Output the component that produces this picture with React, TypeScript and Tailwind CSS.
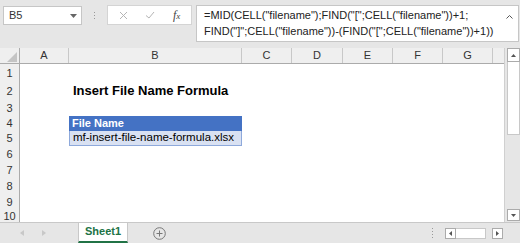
import React from 'react';

const COLS = [
  { key: 'A', w: 'w-[49px]' },
  { key: 'B', w: 'w-[173px]' },
  { key: 'C', w: 'w-[50px]' },
  { key: 'D', w: 'w-[51px]' },
  { key: 'E', w: 'w-[50px]' },
  { key: 'F', w: 'w-[50px]' },
  { key: 'G', w: 'w-[50px]' },
  { key: '', w: 'w-[11px]' },
];

const ROWS = [
  { n: 1, h: 'h-[18px]' },
  { n: 2, h: 'h-[18px]' },
  { n: 3, h: 'h-[16px]' },
  { n: 4, h: 'h-[15px]' },
  { n: 5, h: 'h-[15px]' },
  { n: 6, h: 'h-[16px]' },
  { n: 7, h: 'h-[16px]' },
  { n: 8, h: 'h-[16px]' },
  { n: 9, h: 'h-[16px]' },
  { n: 10, h: 'h-[12px]' },
];

const CellB: React.FC<{ row: number }> = ({ row }) => {
  if (row === 2) {
    return (
      <div className="w-[173px] h-full flex items-center pl-[4px] text-[13px] font-bold text-black">
        Insert File Name Formula
      </div>
    );
  }
  if (row === 4) {
    return (
      <div className="w-[173px] h-full flex items-center pl-[3px] bg-[#4472c4] text-[11px] font-bold text-white">
        File Name
      </div>
    );
  }
  if (row === 5) {
    return (
      <div className="w-[173px] h-full flex items-center pl-[3px] bg-[#d9e1f2] border-x border-b border-[#8ea9db] text-[11.5px] text-black">
        mf-insert-file-name-formula.xlsx
      </div>
    );
  }
  return <div className="w-[173px] h-full" />;
};

const App: React.FC = () => {
  return (
    <div
      className="w-[520px] h-[243px] overflow-hidden flex flex-col bg-[#e6e6e6] text-[#222]"
      style={{ fontFamily: '"Liberation Sans", Arial, sans-serif' }}
    >
      {/* formula bar */}
      <div className="h-[48px] flex items-start pt-[5px]">
        <div className="ml-[3px] mt-[1px] w-[79px] h-[19px] bg-white border border-[#c6c6c6] flex items-center justify-between pl-[5px] pr-[4px] text-[11px] text-[#333]">
          <span>B5</span>
          <svg width="7" height="4" viewBox="0 0 7 4">
            <path d="M0 0h7L3.5 4z" fill="#666" />
          </svg>
        </div>
        <div className="w-[25px] h-[20px] flex flex-col items-center justify-center gap-[2px]">
          <span className="w-[1px] h-[1px] bg-[#999]" />
          <span className="w-[1px] h-[1px] bg-[#999]" />
          <span className="w-[1px] h-[1px] bg-[#999]" />
        </div>
        <div className="w-[85px] h-[20px] bg-white border border-[#d4d4d4] flex items-center">
          <svg className="ml-[11px]" width="9" height="9" viewBox="0 0 9 9">
            <path d="M1 1l7 7M8 1L1 8" stroke="#b5b5b5" strokeWidth="1" fill="none" />
          </svg>
          <svg className="ml-[17px]" width="10" height="8" viewBox="0 0 10 8">
            <path d="M1 4.5l3 2.5L9 1" stroke="#b5b5b5" strokeWidth="1" fill="none" />
          </svg>
          <span
            className="ml-[18px] text-[12px] italic text-[#444] leading-none"
            style={{ fontFamily: '"Liberation Serif", serif' }}
          >
            f<span className="text-[9px]">x</span>
          </span>
        </div>
        <div className="ml-[4px] w-[323px] h-[37px] bg-white border border-[#c6c6c6] flex justify-between pl-[7px] pr-[5px] pt-[1px]">
          <div className="text-[11px] leading-[16px] text-[#222] whitespace-nowrap">
            <div>=MID(CELL("filename");FIND("[";CELL("filename"))+1;</div>
            <div>FIND("]";CELL("filename"))-(FIND("[";CELL("filename"))+1))</div>
          </div>
          <svg className="mt-[8px]" width="7" height="4" viewBox="0 0 7 4">
            <path d="M0.5 3.5L3.5 0.5L6.5 3.5" stroke="#555" strokeWidth="1" fill="none" />
          </svg>
        </div>
      </div>

      {/* sheet area */}
      <div className="h-[174px] flex">
        <div className="w-[504px] flex flex-col bg-white">
          <div className="h-[16px] flex bg-[#efefef] border-b border-[#ababab]">
            <div className="w-[20px] h-full border-r border-[#ababab] flex items-end justify-end pr-[2px] pb-[1px]">
              <svg width="10" height="10" viewBox="0 0 10 10">
                <path d="M10 0V10H0z" fill="#c4c4c4" />
              </svg>
            </div>
            {COLS.map((c, i) => (
              <div
                key={i}
                className={`${c.w} h-full flex items-center justify-center text-[11px] text-[#333] ${i < COLS.length - 1 ? 'border-r border-[#c8c8c8]' : ''}`}
              >
                {c.key}
              </div>
            ))}
          </div>
          {ROWS.map((r) => (
            <div key={r.n} className={`${r.h} flex`}>
              <div className="w-[20px] h-full bg-[#efefef] border-r border-[#ababab] flex items-center justify-center text-[11px] text-[#333] overflow-hidden">
                {r.n}
              </div>
              <div className="w-[49px] h-full" />
              <CellB row={r.n} />
            </div>
          ))}
        </div>

        {/* vertical scrollbar */}
        <div className="w-[16px] flex flex-col items-center pl-[1px] border-l border-[#d0d0d0]">
          <div className="w-[13px] h-[14px] bg-white border border-[#ababab] flex items-center justify-center">
            <svg width="5" height="3" viewBox="0 0 5 3">
              <path d="M0 3L2.5 0L5 3z" fill="#555" />
            </svg>
          </div>
          <div className="w-[13px] h-[73px] bg-white border-x border-b border-[#c8c8c8]" />
          <div className="flex-1" />
          <div className="w-[13px] h-[12px] mb-[1px] bg-white border border-[#ababab] flex items-center justify-center">
            <svg width="5" height="3" viewBox="0 0 5 3">
              <path d="M0 0L2.5 3L5 0z" fill="#555" />
            </svg>
          </div>
        </div>
      </div>

      {/* sheet tabs */}
      <div className="h-[21px] flex items-center border-t border-[#c8c8c8]">
        <svg className="ml-[20px]" width="4" height="6" viewBox="0 0 4 6">
          <path d="M4 0V6L0 3z" fill="#c8c8c8" />
        </svg>
        <svg className="ml-[18px]" width="4" height="6" viewBox="0 0 4 6">
          <path d="M0 0V6L4 3z" fill="#c8c8c8" />
        </svg>
        <div className="ml-[32px] w-[50px] h-full -mt-[1px] bg-white border-x border-[#c8c8c8] border-b-2 border-b-[#217346] flex items-center justify-center text-[11px] font-bold text-[#217346]">
          Sheet1
        </div>
        <svg className="ml-[25px]" width="13" height="13" viewBox="0 0 13 13">
          <circle cx="6.5" cy="6.5" r="5.8" stroke="#777" strokeWidth="1" fill="none" />
          <path d="M6.5 3.5v6M3.5 6.5h6" stroke="#777" strokeWidth="1" />
        </svg>
        <div className="flex-1" />
        <div className="flex flex-col gap-[2px] mr-[12px]">
          <span className="w-[1px] h-[1px] bg-[#999]" />
          <span className="w-[1px] h-[1px] bg-[#999]" />
          <span className="w-[1px] h-[1px] bg-[#999]" />
          <span className="w-[1px] h-[1px] bg-[#999]" />
        </div>
        <div className="w-[11px] h-[11px] bg-white border border-[#ababab] flex items-center justify-center">
          <svg width="3" height="5" viewBox="0 0 3 5">
            <path d="M3 0V5L0 2.5z" fill="#555" />
          </svg>
        </div>
        <div className="w-[30px] h-[11px] bg-white border-y border-r border-[#c8c8c8]" />
        <div className="ml-[6px] mr-[17px] w-[11px] h-[11px] bg-white border border-[#ababab] flex items-center justify-center">
          <svg width="3" height="5" viewBox="0 0 3 5">
            <path d="M0 0V5L3 2.5z" fill="#555" />
          </svg>
        </div>
      </div>
    </div>
  );
};

export default App;
